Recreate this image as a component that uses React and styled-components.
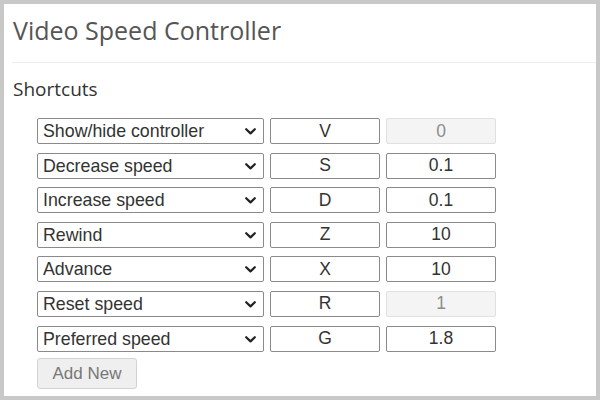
import React from "react"
import styled, { createGlobalStyle } from "styled-components"

const GlobalStyle = createGlobalStyle`
  html, body {
    margin: 0;
    padding: 0;
    background: #fff;
  }
  * {
    box-sizing: border-box;
  }
`

const Frame = styled.div`
  width: 600px;
  height: 400px;
  border: 4px solid #c8c8c8;
  background: #fff;
  font-family: "Liberation Sans", Arial, sans-serif;
  color: #333;
  overflow: hidden;
`

const Header = styled.h1`
  margin: 0 0 0 8px;
  padding: 9px 0 15px 1px;
  font-family: "Open Sans", "Liberation Sans", sans-serif;
  font-weight: 400;
  font-size: 25px;
  line-height: 34px;
  color: #555;
  border-bottom: 1px solid #ececec;
`

const Section = styled.section`
  padding: 13px 0 0 9px;
`

const SectionTitle = styled.h2`
  margin: 0 0 16px 0;
  font-family: "Open Sans", "Liberation Sans", sans-serif;
  font-weight: 400;
  font-size: 19px;
  line-height: 26px;
  color: #333;
`

const Table = styled.div`
  display: flex;
  flex-direction: column;
  gap: 8.6px;
  padding-left: 24px;
`

const Row = styled.div`
  display: flex;
  gap: 6px;
  height: 26px;
`

const SelectWrap = styled.div`
  position: relative;
  width: 227px;
  height: 26px;
`

const Select = styled.select`
  appearance: none;
  width: 100%;
  height: 100%;
  font-family: "Liberation Sans", Arial, sans-serif;
  font-size: 17.8px;
  color: #333;
  border: 1px solid #8a8a8a;
  border-radius: 2px;
  background: #fff;
  padding: 0 24px 0 5px;
`

const Chevron = styled.svg`
  position: absolute;
  right: 8px;
  top: 10px;
  width: 11px;
  height: 7px;
  pointer-events: none;
`

const Field = styled.input`
  width: 110px;
  height: 26px;
  font-family: "Liberation Sans", Arial, sans-serif;
  font-size: 17.5px;
  text-align: center;
  color: ${(p) => (p.disabled ? "#8c8c8c" : "#333")};
  background: ${(p) => (p.disabled ? "#f4f4f4" : "#fff")};
  border: 1px solid ${(p) => (p.disabled ? "#e0e0e0" : "#8a8a8a")};
  border-radius: 2px;
  padding: 0;
`

const ButtonBar = styled.div`
  margin-top: -2px;
`

const AddButton = styled.button`
  width: 100px;
  height: 31px;
  font-family: "Liberation Sans", Arial, sans-serif;
  font-size: 17px;
  color: #777;
  background: #efefef;
  border: 1px solid #d2d2d2;
  border-radius: 3px;
`

const actions = [
  "Show/hide controller",
  "Decrease speed",
  "Increase speed",
  "Rewind",
  "Advance",
  "Reset speed",
  "Preferred speed",
]

const shortcuts = [
  { action: "Show/hide controller", key: "V", value: "0", fixed: true },
  { action: "Decrease speed", key: "S", value: "0.1" },
  { action: "Increase speed", key: "D", value: "0.1" },
  { action: "Rewind", key: "Z", value: "10" },
  { action: "Advance", key: "X", value: "10" },
  { action: "Reset speed", key: "R", value: "1", fixed: true },
  { action: "Preferred speed", key: "G", value: "1.8" },
]

const ActionSelect = ({ value }) => (
  <SelectWrap>
    <Select defaultValue={value}>
      {actions.map((a) => (
        <option key={a}>{a}</option>
      ))}
    </Select>
    <Chevron viewBox="0 0 11 7">
      <path
        d="M1.2 1.2 L5.5 5.4 L9.8 1.2"
        fill="none"
        stroke="#222"
        strokeWidth="2.2"
        strokeLinecap="round"
        strokeLinejoin="round"
      />
    </Chevron>
  </SelectWrap>
)

export default function App() {
  return (
    <>
      <GlobalStyle />
      <Frame>
        <Header>Video Speed Controller</Header>
        <Section>
          <SectionTitle>Shortcuts</SectionTitle>
          <Table>
            {shortcuts.map((s) => (
              <Row key={s.action}>
                <ActionSelect value={s.action} />
                <Field defaultValue={s.key} readOnly />
                <Field defaultValue={s.value} disabled={s.fixed} />
              </Row>
            ))}
            <ButtonBar>
              <AddButton>Add New</AddButton>
            </ButtonBar>
          </Table>
        </Section>
      </Frame>
    </>
  )
}
